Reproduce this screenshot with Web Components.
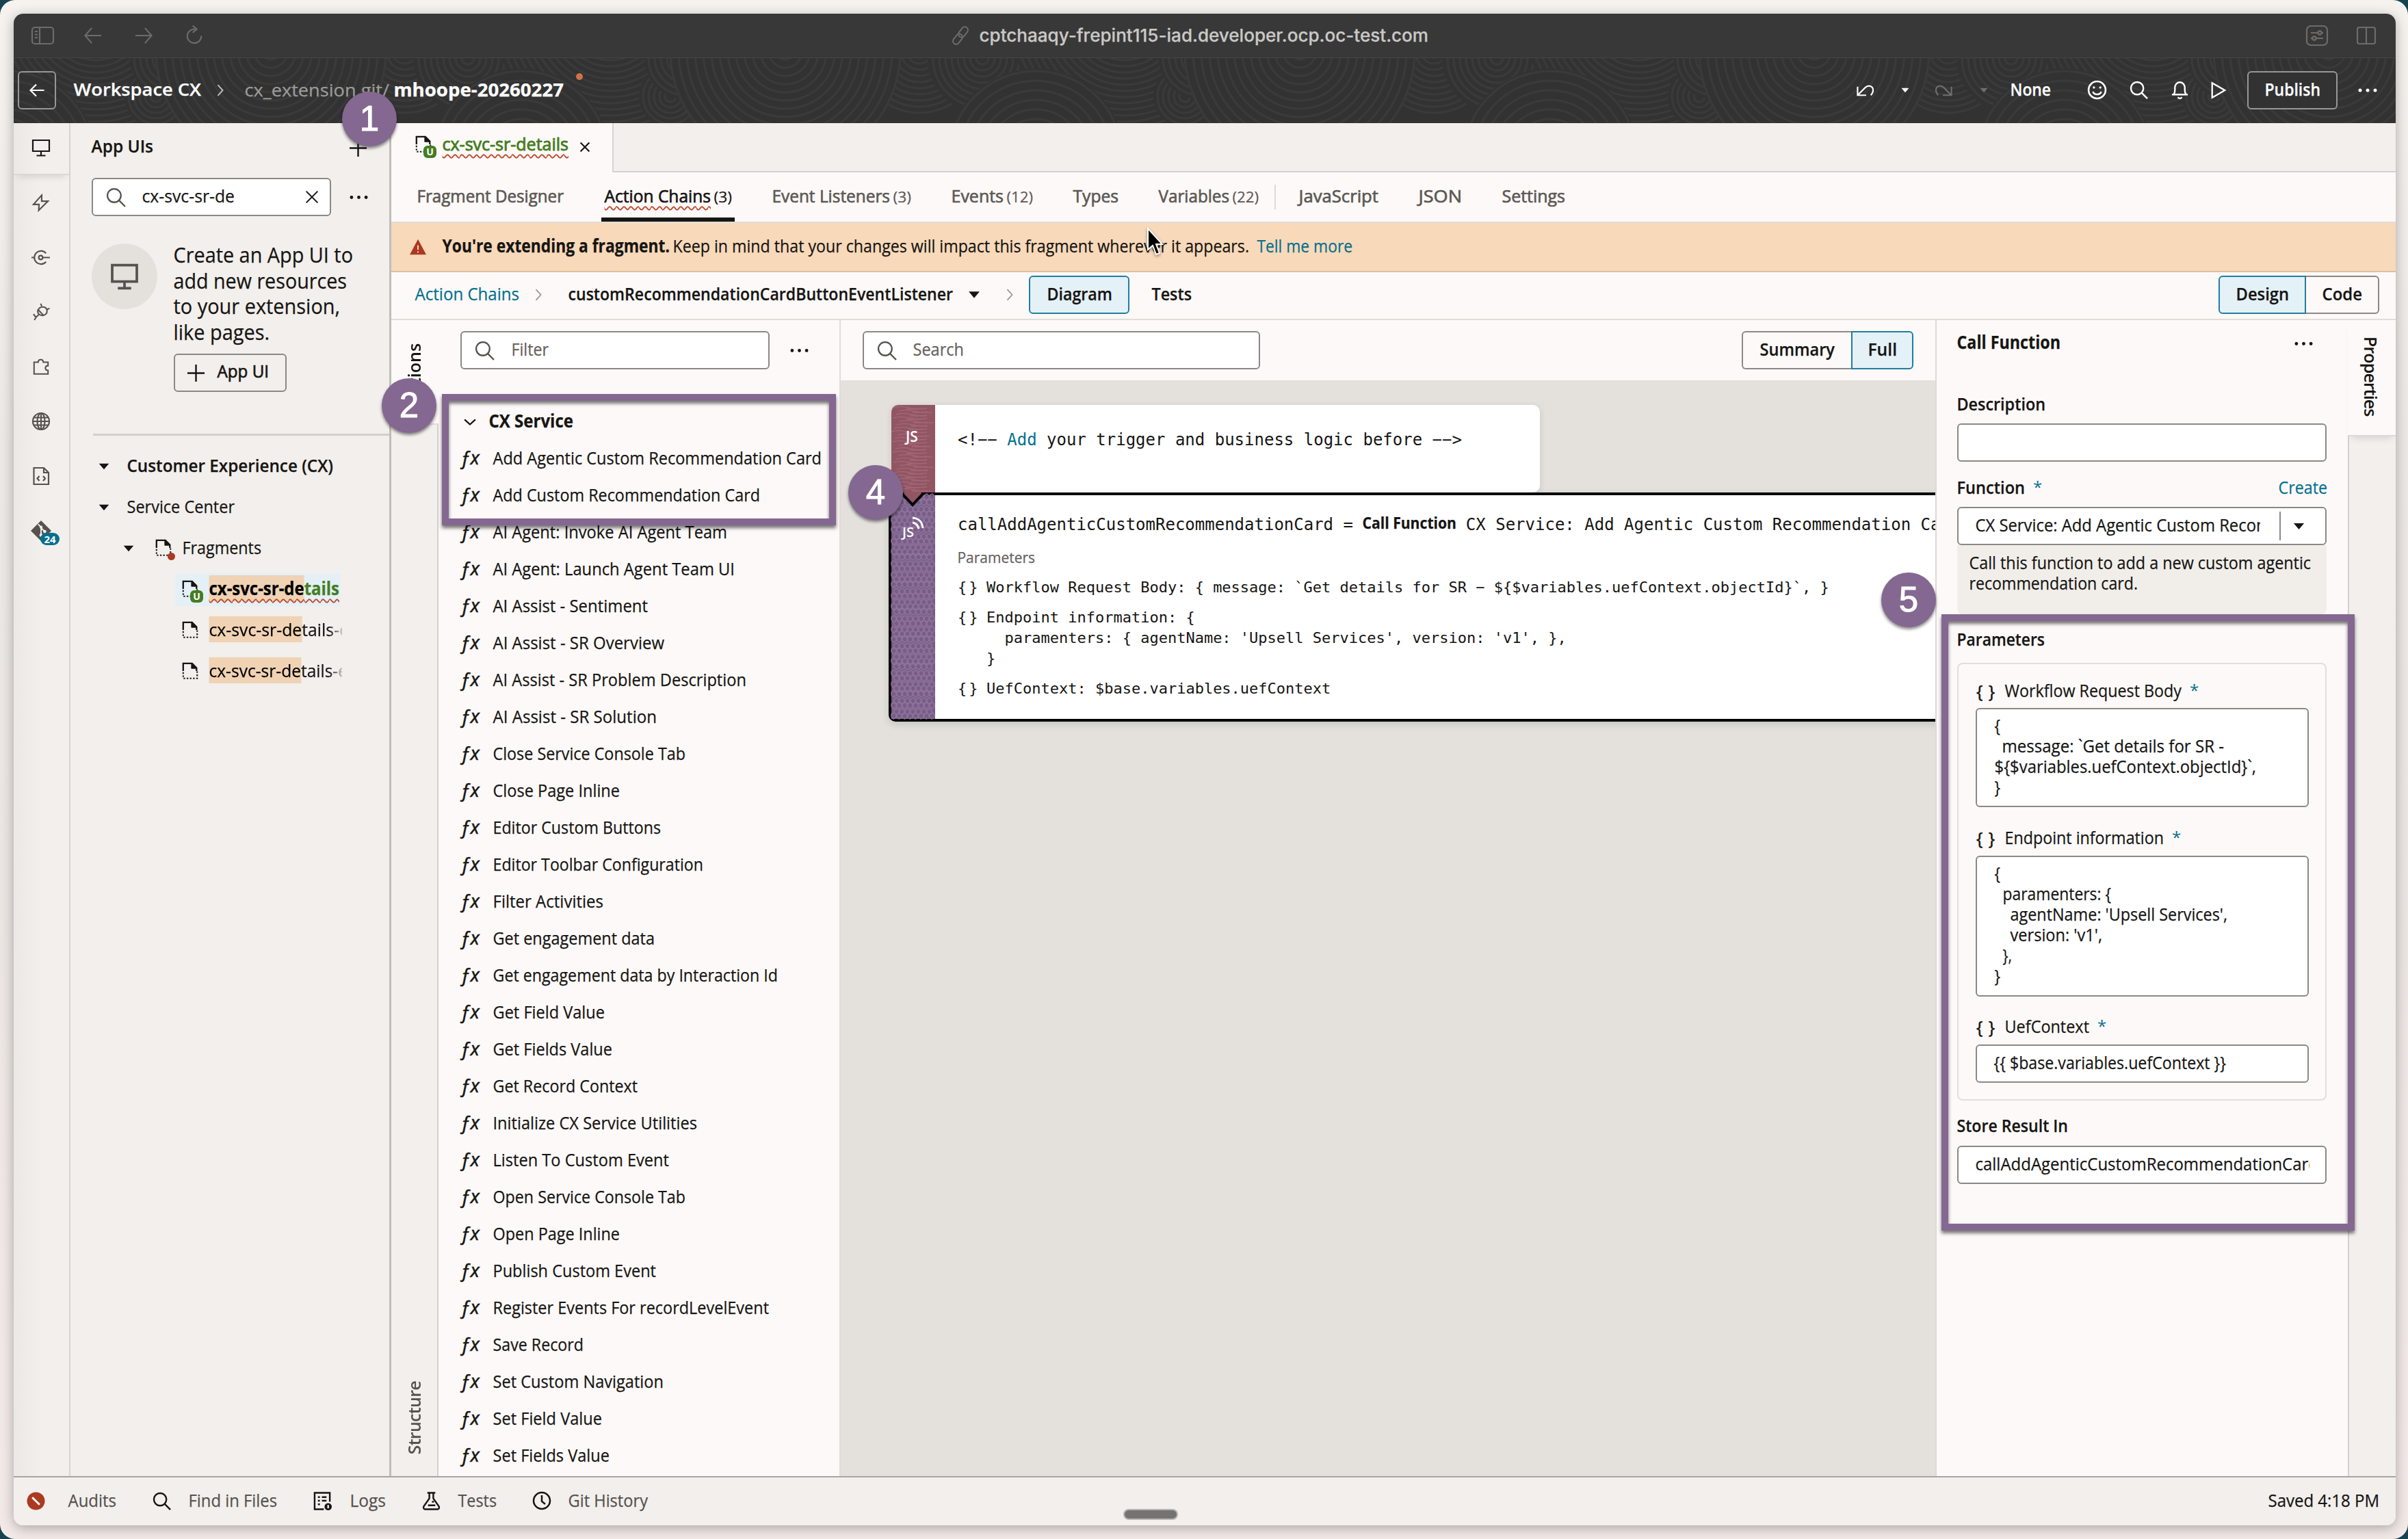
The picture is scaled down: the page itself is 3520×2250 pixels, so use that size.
<!DOCTYPE html>
<html lang="en">
<head>
<meta charset="utf-8">
<title>cx-svc-sr-details</title>
<style>
  body {
    margin: 0;
    width: 3520px;
    height: 2250px;
    overflow: hidden;
    background: #174350;
    font-family: 'Open Sans', 'Noto Sans', sans-serif;
    font-size: 26px;
    color: #161513;
  }
</style>
</head>
<body>
<cx-workspace></cx-workspace>

<script>
const ICONS = {
  monitor: '<path d="M2 3h24v16H2zM14 19v6M7.500 25.500h13"/>',
  bolt: '<path d="M15.500 2.500 3 16.500h8.500L11 25.500l14-14h-9.500z"/>',
  connect: '<path d="M22 7.500a10 10 0 1 0 0 13M0 14h4M17 14h11"/><circle cx="14" cy="14" r="3"/>',
  plug: '<path d="M9.500 10.500 18 19.500c5-1.500 7-6 4.500-10.500C20 5 12.500 5 9.500 10.500zM15 5l-1.500-4M23.500 10l4-1.500M9 11c-1 5 2 9 8.500 8.500M10.500 18 6 22.500 2 17.500M6 22.500 3.500 27"/>',
  puzzle: '<path d="M3 25.500V7h6.500c0-5.500 8-5.500 8 0H25v5.500c-5.500 0-5.500 7.500 0 7.500v5.500z"/>',
  globe: '<circle cx="14" cy="14" r="12"/><ellipse cx="14" cy="14" rx="5.500" ry="12"/><path d="M2 14h24M14 2v24M4 8.500h20M4 19.500h20"/>',
  filecode: '<path d="M3.500 2h14.500l7 7v17h-21.500zM18 2v7h7M11.500 14l-3 3.500 3 3.500M17 14l3 3.500-3 3.500"/>',
  git: '<path d="M14 0 28 14 14 28 0 14z" fill="currentColor" stroke="none"/><g stroke="#f2efec" stroke-width="1.800"><path d="M10 5l4 4v11M14 10l5 5"/></g><g fill="#f2efec" stroke="none"><circle cx="14" cy="9" r="2"/><circle cx="14" cy="20" r="2.200"/><circle cx="19" cy="15" r="2.200"/></g>',
  search: '<circle cx="11.500" cy="11.500" r="9.500"/><path d="M18.500 18.500 27 27"/>',
  close: '<path d="M5 5l18 18M23 5 5 23"/>',
  plus: '<path d="M14 1v26M1 14h26"/>',
  dots: '<g fill="currentColor" stroke="none"><circle cx="3" cy="14" r="2.500"/><circle cx="14" cy="14" r="2.500"/><circle cx="25" cy="14" r="2.500"/></g>',
  caret: '<path d="M5.500 9h17L14 19z" fill="currentColor" stroke="none"/>',
  right: '<path d="M9.500 4l9 10-9 10"/>',
  down: '<path d="M4 9.500l10 9 10-9"/>',
  left: '<path d="M13 5.500 4.500 14l8.500 8.500M4.500 14h20"/>',
  arrowLeft: '<path d="M12 2 1.500 14 12 26M1.500 14h25.500"/>',
  arrowRight: '<path d="M16 2l10.500 12L16 26M26.500 14H1"/>',
  reload: '<path d="M25 14.500a11 11 0 1 1-9.500-10.500M11.500-1.500l6.500 5.500-6.500 5.500"/>',
  sidebar: '<rect x="0" y="2" width="31" height="24" rx="4"/><path d="M11 2v24M4 8h4M4 12.500h4M4 17h4"/>',
  link: '<g transform="rotate(-52 14 14)"><rect x="-2" y="9" width="18" height="10" rx="5"/><rect x="12" y="9" width="18" height="10" rx="5"/></g>',
  sliders: '<rect x="-1" y="0" width="30" height="28" rx="6"/><path d="M5 10h10M21 10h2M5 18h2M13 18h10"/><circle cx="18" cy="10" r="2.600"/><circle cx="10" cy="18" r="2.600"/>',
  split: '<rect x="1" y="2" width="26" height="24" rx="3"/><path d="M14 2v24"/>',
  undo: '<path d="M2.500 9v13h13M2.500 22 14 10.500c5-5 12-2 12 4 0 3-1.500 5.500-3.500 7.500"/>',
  redo: '<path d="M25.500 9v13h-13M25.500 22 14 10.500c-5-5-12-2-12 4 0 3 1.500 5.500 3.500 7.500"/>',
  smile: '<circle cx="14" cy="14" r="12"/><path d="M8 16.500c2.500 5 9.500 5 12 0"/><g fill="currentColor" stroke="none"><circle cx="9.500" cy="10.500" r="1.600"/><circle cx="18.500" cy="10.500" r="1.600"/></g>',
  bell: '<path d="M2 21h24M4.500 21c2.500-3 2-6 2-10 0-11.500 15-11.500 15 0 0 4-.500 7 2 10M11 25c1.500 2.500 4.500 2.500 6 0"/>',
  play: '<path d="M4 2.500v23L24 14z"/>',
  warn: '<path d="M14 1 28 27H0z" fill="#aa3a22" stroke="none"/><path d="M14 11v8M14 21.500v2.500" stroke="#f8d9ba"/>',
  fragment: '<path d="M3 14V2h14l7 7v5" stroke-width="2.500"/><path d="M16 2v8h8" fill="currentColor" stroke-width="1"/><path d="M3 16v9.500h22V14" stroke-dasharray="2.500 2.500"/>',
  noentry: '<circle cx="14" cy="14" r="13.500" fill="#aa3a22" stroke="none"/><path d="M8.500 8.500l11 11" stroke="#fff" stroke-width="3"/>',
  logs: '<path d="M16 26.500H2v-25h23V15M7 8h3M13 8h7M7 13.500h3M13 13.500h7M7 19h3"/><circle cx="22.500" cy="22.500" r="5.500" fill="currentColor" stroke="none"/><path d="M22.500 20v5" stroke="#f2efec"/>',
  flask: '<path d="M8 1.500h12M11 2v8L2.500 22c-1 2.500 0 4.500 3 4.500h17c3 0 4-2 3-4.500L17 10V2M9 20.500h11M15 15h3"/>',
  clock: '<circle cx="14" cy="14" r="12"/><path d="M14 6v9l5 4"/>'
}

// Shared base: renders the class template into an open shadow root
class CxElement extends HTMLElement {
  constructor () {
    super()
    this.shadow = this.attachShadow({ mode: 'open' })
  }

  connectedCallback () {
    this.shadow.innerHTML = this.template()
  }
}

const t = (text, w, attrs = '') => `<ui-text w="${w}" ${attrs}>${text}</ui-text>`
const i = (name, size = 28, style = '', weight = 2.2) =>
  `<ui-icon name="${name}" size="${size}" weight="${weight}" style="${style}"></ui-icon>`

class UiIcon extends CxElement {
  template () {
    const size = this.getAttribute('size')
    return `
      <style>
        :host { display: block; flex: none; width: ${size}px; height: ${size}px; }
        svg { display: block; overflow: visible; }
      </style>
      <svg width="${size}" height="${size}" viewBox="0 0 28 28" fill="none" stroke="currentColor"
        stroke-width="${this.getAttribute('weight')}">${ICONS[this.getAttribute('name')]}</svg>`
  }
}

class ContourPattern extends CxElement {
  rings (cx, cy, max, step) {
    let out = `<circle cx="${cx}" cy="${cy}" r="${max}" fill="#323232" stroke="none"/>`
    for (let r = step; r <= max; r += step) out += `<circle cx="${cx}" cy="${cy}" r="${r}"/>`
    return out
  }

  template () {
    return `
      <style>:host, svg { display: block; width: 100%; height: 100%; }</style>
      <svg>
        <defs>
          <pattern id="p" width="752" height="95" patternUnits="userSpaceOnUse" x="572">
            <g fill="none" stroke="#3a3a3a" stroke-width="3">
              ${this.rings(0, -10, 90, 9)}${this.rings(752, -10, 90, 9)}
              ${this.rings(92, 0, 80, 9)}
              ${this.rings(300, -60, 170, 9)}
              ${this.rings(388, 56, 46, 8)}${this.rings(410, 0, 60, 9)}
              ${this.rings(556, -10, 170, 12)}
              ${this.rings(170, 145, 130, 14)}
            </g>
          </pattern>
        </defs>
        <rect width="100%" height="100%" fill="url(#p)"/>
      </svg>`
  }
}

class BrowserBar extends CxElement {
  template () {
    return `
      <style>
        :host { display: flex; align-items: center; height: 64px; background: #383838; color: #6d6c6b; border-bottom: 1px solid #444; }
        .url { color: #cac8c6; font-family: Inter, sans-serif; font-weight: 500; margin: 2px 0 0 15px; }
      </style>
      ${i('sidebar', 28, 'margin-left:27px')}
      ${i('arrowLeft', 26, 'margin-left:48px')}
      ${i('arrowRight', 26, 'margin-left:48px')}
      ${i('reload', 26, 'margin-left:48px')}
      ${i('link', 26, 'margin-left:1094px')}
      <div class="url">${t('cptchaaqy-frepint115-iad.developer.ocp.oc-test.com', 655)}</div>
      ${i('sliders', 28, 'margin-left:1286px')}
      ${i('split', 28, 'margin-left:44px')}`
  }
}

class AppHeader extends CxElement {
  template () {
    return `
      <style>
        :host { display: grid; height: 95px; grid-template-rows: 95px; background: #323232; color: #fff; }
        contour-pattern, .row { grid-area: 1 / 1; }
        .row { display: flex; align-items: center; min-width: 0; padding-bottom: 2px; }
        .back, .publish { box-sizing: border-box; height: 56px; border: 2px solid #989795; border-radius: 6px; display: flex; align-items: center; justify-content: center; }
        .back { width: 56px; margin-left: 6px; }
        .publish { width: 132px; margin-left: 29px; background: #323232; }
        .dot { width: 10px; height: 10px; border-radius: 50%; background: #d0714a; margin: 0 0 40px 19px; }
        .grow { flex: 1; }
      </style>
      <contour-pattern></contour-pattern>
      <div class="row">
        <div class="back">${i('left', 28)}</div>
        ${t('Workspace CX', 185, 'style="margin-left:26px;font-weight:600"')}
        ${i('right', 22, 'margin-left:18px;color:#bbb', 2.5)}
        ${t('cx_extension.git/', 210, 'style="margin-left:25px;color:#9d9b99;padding-top:3px"')}
        ${t('mhoope-20260227', 247, 'style="margin-left:8px;font-weight:700;padding-top:3px"')}
        <div class="dot"></div>
        <div class="grow"></div>
        ${i('undo', 27)}
        ${i('caret', 18, 'margin-left:36px')}
        ${i('redo', 27, 'margin-left:34px;color:#6f6e6d')}
        ${i('caret', 18, 'margin-left:36px;color:#6f6e6d')}
        ${t('None', 58, 'style="margin-left:30px;font-weight:600"')}
        ${i('smile', 29, 'margin-left:54px', 2.5)}
        ${i('search', 27, 'margin-left:33px', 2.5)}
        ${i('bell', 27, 'margin-left:33px', 2.5)}
        ${i('play', 26, 'margin-left:30px', 2.5)}
        <div class="publish">${t('Publish', 80, 'style="font-weight:600"')}</div>
        ${i('dots', 28, 'margin:0 27px 0 30px')}
      </div>`
  }
}

class SideRail extends CxElement {
  template () {
    return `
      <style>
        :host { display: flex; flex-direction: column; width: 83px; border-right: 2px solid #d8d4d1; box-sizing: border-box; background: linear-gradient(90deg, #ebe8e5, #f2efec 40px); color: #55524f; }
        div { height: 80px; display: flex; align-items: center; justify-content: center; padding-right: 2px; }
        .on { height: 74px; color: #161513; border-bottom: 2px solid #dcd8d5; box-shadow: 0 8px 10px -6px #00000022; }
        .on ui-icon { margin-bottom: 2px; }
        .git { position: relative; }
        b { position: absolute; left: 39px; top: 43px; width: 28px; height: 18px; border-radius: 9px; background: #04708e; color: #fff; font-size: 15px; line-height: 18px; text-align: center; }
      </style>
      <div class="on">${i('monitor', 28)}</div>
      <div>${i('bolt', 27)}</div>
      <div>${i('connect', 27)}</div>
      <div>${i('plug', 26)}</div>
      <div>${i('puzzle', 26)}</div>
      <div>${i('globe', 28)}</div>
      <div>${i('filecode', 28)}</div>
      <div class="git">${i('git', 30)}<b>24</b></div>`
  }
}

class FragmentIcon extends CxElement {
  template () {
    const badge = this.getAttribute('badge')
    return `
      <style>
        :host { display: block; position: relative; width: 24px; height: 28px; flex: none; color: #161513; }
        .U { position: absolute; left: 12px; top: 15px; width: 19px; height: 18px; border-radius: 6px; background: #457d22; color: #fff; font: bold 14px/18px 'Open Sans'; text-align: center; }
        .dot { position: absolute; left: 18px; top: 20px; width: 11px; height: 11px; border-radius: 50%; background: #aa3a22; }
      </style>
      ${i('fragment', 26, 'margin-left:-1px')}
      ${badge === 'U' ? '<span class="U">U</span>' : badge ? '<span class="dot"></span>' : ''}`
  }
}

class TextField extends CxElement {
  template () {
    return `
      <style>
        :host { display: flex; align-items: center; box-sizing: border-box; height: 56px; border: 2px solid #8b8987; border-radius: 6px; background: #fff; overflow: hidden; flex: none; }
      </style>
      <slot></slot>`
  }
}

class AppPanel extends CxElement {
  template () {
    return `
      <style>
        :host { display: flex; flex-direction: column; box-sizing: border-box; width: 469px; border-right: 3px solid #c1bdbb; background: #f2efec; }
        .row { display: flex; align-items: center; flex: none; }
        .title { height: 70px; padding-left: 31px; }
        .promo { align-items: flex-start; margin: 40px 0 0 31px; height: 278px; box-sizing: border-box; }
        .circle { width: 96px; height: 96px; border-radius: 50%; background: #e4e1dd; display: flex; align-items: center; justify-content: center; color: #55524f; }
        .copy { margin-left: 24px; font-size: 31px; line-height: 37.500px; }
        .copy > ui-text { display: block; }
        .btn { box-sizing: border-box; width: 165px; height: 56px; border: 2px solid #8b8987; border-radius: 6px; margin-top: 11px; font-size: 26px; }
        hr { margin: 0 0 0 33px; border: 0; border-top: 3px solid #d3cfcc; width: 433px; }
        .tree { padding-top: 15px; }
        .tree .row { height: 60px; }
        mark { background: #f0d3b4; color: #000; padding: 1px 0; }
        .tree .sel { margin: 6px 0 6px 153px; height: 48px; width: 241px; background: #e4f0f6; }
        .leaf { margin-left: 153px; width: 244px; overflow: hidden; -webkit-mask: linear-gradient(90deg, #000 225px, #0003); }
      </style>
      <div class="row title">
        ${t('App UIs', 89, 'style="font-weight:600"')}
        ${i('plus', 27, 'margin:2px 0 0 287px', 2.500)}
      </div>
      <div class="row" style="padding:10px 0 0 31px">
        <text-field style="width:350px">
          ${i('search', 29, 'margin-left:19px;color:#55524f')}
          ${t('cx-svc-sr-de', 134, 'style="margin-left:24px"')}
          ${i('close', 26, 'margin-left:101px')}
        </text-field>
        ${i('dots', 27, 'margin-left:27px')}
      </div>
      <div class="row promo">
        <div class="circle">${i('monitor', 42, '', 2.500)}</div>
        <div class="copy">
          ${t('Create an App UI to', 261)}
          ${t('add new resources', 252)}
          ${t('to your extension,', 242)}
          ${t('like pages.', 139)}
          <div class="row btn">
            ${i('plus', 27, 'margin-left:17px', 2.500)}
            ${t('App UI', 74, 'style="margin-left:18px;--ink:.7px"')}
          </div>
        </div>
      </div>
      <hr>
      <div class="tree">
        <div class="row">${i('caret', 24, 'margin-left:37px')}${t('Customer Experience (CX)', 300, 'style="margin-left:22px;font-weight:600"')}</div>
        <div class="row">${i('caret', 24, 'margin-left:37px')}${t('Service Center', 156, 'style="margin-left:22px"')}</div>
        <div class="row">${i('caret', 24, 'margin-left:73px')}<fragment-icon badge="dot" style="margin-left:27px"></fragment-icon>${t('Fragments', 114, 'style="margin-left:16px"')}</div>
        <div class="row sel">
          <fragment-icon badge="U" style="margin-left:10px"></fragment-icon>
          ${t('<mark>cx-svc-sr-de</mark>tails', 189, 'squiggle style="margin-left:16px;font-weight:700;color:#457d22"')}
        </div>
        <div class="row leaf"><fragment-icon style="margin-left:10px"></fragment-icon>${t('<mark>cx-svc-sr-de</mark>tails-c', 201, 'style="margin-left:16px"')}</div>
        <div class="row leaf"><fragment-icon style="margin-left:10px"></fragment-icon>${t('<mark>cx-svc-sr-de</mark>tails-e', 201, 'style="margin-left:16px"')}</div>
      </div>`
  }
}

class EditorTabs extends CxElement {
  template () {
    const tab = (label, w, gap, count, cw) => `
      <div style="margin-left:${gap}px">${t(label, w)}${count ? t(count, cw, 'class="n"') : ''}</div>`
    return `
      <style>
        :host { display: block; }
        .files { display: flex; height: 72px; }
        .file { width: 323px; display: flex; align-items: center; background: #fdf9f8; border-right: 2px solid #d8d4d1; padding-bottom: 8px; height: 64px; }
        .rest { flex: 1; height: 70px; background: #f2efec; border-bottom: 2px solid #d3d0cd; }
        nav { display: flex; align-items: center; height: 72px; border-bottom: 2px solid #e0dcd9; color: #5c5956; --ink: .7px; }
        nav div { display: flex; align-items: baseline; height: 72px; line-height: 72px; }
        .n { font-size: 22px; margin-left: 6px; --ink: .2px; }
        nav .on { margin-left: 56px; padding: 0 5px; height: 66px; color: #161513; border-bottom: 6px solid #161513; }
        nav i { width: 2px; height: 36px; background: #dcd9d6; margin-left: 24px; }
      </style>
      <div class="files">
        <div class="file">
          <fragment-icon badge="U" style="margin-left:35px"></fragment-icon>
          ${t('cx-svc-sr-details', 183, 'squiggle style="margin-left:16px;color:#457d22;--ink:.9px"')}
          ${i('close', 20, 'margin:5px 0 0 15px', 3)}
        </div>
        <div class="rest"></div>
      </div>
      <nav>
        ${tab('Fragment Designer', 213, 38)}
        <div class="on">${t('Action Chains', 154, 'squiggle')}${t('(3)', 25, 'class="n"')}</div>
        ${tab('Event Listeners', 171, 55, '(3)', 25)}
        ${tab('Events', 75, 60, '(12)', 37)}
        ${tab('Types', 65, 60)}
        ${tab('Variables', 102, 60, '(22)', 37)}
        <i></i>
        ${tab('JavaScript', 115, 34)}
        ${tab('JSON', 62, 60)}
        ${tab('Settings', 91, 60)}
      </nav>`
  }
}

class FragmentWarning extends CxElement {
  template () {
    return `
      <style>
        :host { display: flex; align-items: center; height: 70px; background: #f8d9ba; border-bottom: 2px solid #dcc0a3; }
      </style>
      ${i('warn', 24, 'margin-left:27px')}
      ${t('You\'re extending a fragment.', 331, 'style="margin-left:24px;font-weight:700"')}
      ${t('Keep in mind that your changes will impact this fragment wherever it appears.', 841, 'style="margin-left:6px"')}
      ${t('Tell me more', 138, 'style="margin-left:13px;color:#04708e"')}`
  }
}

class SegGroup extends CxElement {
  template () {
    const items = this.getAttribute('items').split('|').map(s => s.split(','))
    return `
      <style>
        :host { display: flex; height: 56px; font-weight: 600; flex: none; }
        div { box-sizing: border-box; height: 56px; display: flex; align-items: center; justify-content: center; border: 2px solid #8b8987; }
        div:first-of-type { border-radius: 6px 0 0 6px; }
        div:last-of-type { border-radius: 0 6px 6px 0; }
        div:only-of-type { border-radius: 6px; }
        div:first-of-type:not(.on) { border-right: 0; }
        div:last-of-type:not(.on) { border-left: 0; }
        .on { background: #e4f1f7; border-color: #227e9e; }
      </style>
      ${items.map(([label, tw, w, on]) => `<div class="${on || ''}" style="width:${w}px">${t(label, tw)}</div>`).join('')}`
  }
}

class ChainCrumbs extends CxElement {
  template () {
    return `
      <style>
        :host { display: flex; align-items: center; height: 66px; padding-bottom: 2px; border-bottom: 2px solid #e0dcd9; }
        .grow { flex: 1; }
      </style>
      ${t('Action Chains', 151, 'style="margin-left:35px;color:#04708e"')}
      ${i('right', 22, 'margin-left:18px;color:#9a9794')}
      ${t('customRecommendationCardButtonEventListener', 561, 'style="margin-left:33px;font-weight:600"')}
      ${i('caret', 26, 'margin-left:19px')}
      ${i('right', 22, 'margin-left:28px;color:#9a9794')}
      <seg-group items="Diagram,94,147,on" style="margin-left:17px"></seg-group>
      ${t('Tests', 57, 'style="margin-left:33px;font-weight:600"')}
      <div class="grow"></div>
      <seg-group items="Design,76,128,on|Code,57,107" style="margin-right:24px"></seg-group>`
  }
}

const ACTIONS = [
  ['Add Agentic Custom Recommendation Card', 479], ['Add Custom Recommendation Card', 389],
  ['AI Agent: Invoke AI Agent Team', 341], ['AI Agent: Launch Agent Team UI', 352],
  ['AI Assist - Sentiment', 225], ['AI Assist - SR Overview', 249],
  ['AI Assist - SR Problem Description', 369], ['AI Assist - SR Solution', 238],
  ['Close Service Console Tab', 280], ['Close Page Inline', 184],
  ['Editor Custom Buttons', 244], ['Editor Toolbar Configuration', 306],
  ['Filter Activities', 160], ['Get engagement data', 235],
  ['Get engagement data by Interaction Id', 415], ['Get Field Value', 162],
  ['Get Fields Value', 173], ['Get Record Context', 210],
  ['Initialize CX Service Utilities', 297], ['Listen To Custom Event', 256],
  ['Open Service Console Tab', 280], ['Open Page Inline', 184],
  ['Publish Custom Event', 237], ['Register Events For recordLevelEvent', 402],
  ['Save Record', 131], ['Set Custom Navigation', 248],
  ['Set Field Value', 158], ['Set Fields Value', 169]
]

class ActionPalette extends CxElement {
  template () {
    return `
      <style>
        :host { display: flex; flex: none; width: 657px; background: #fdf9f8; border-right: 2px solid #e0dcd9; box-sizing: border-box; }
        .strip { width: 69px; display: flex; flex-direction: column; justify-content: space-between; }
        .v { writing-mode: vertical-rl; transform: rotate(180deg); font-weight: 600; font-size: 25px; line-height: 66px; }
        .top { height: 151px; }
        .top .v { margin-top: 34px; height: 90px; text-align: end; }
        .low { flex: 1; background: #f2efec; border-right: 2px solid #d3d0cd; border-top: 2px solid #e0dcd9; display: flex; align-items: flex-end; color: #55524f; }
        .low .v { margin-bottom: 32px; letter-spacing: -.7px; }
        .list { flex: 1; }
        .row { display: flex; align-items: center; height: 54px; }
        .filter { height: 56px; padding: 16px 0 50px 32px; }
        .fx { width: 26px; margin-left: 32px; font-style: italic; font-size: 27px; -webkit-text-stroke: .6px; padding-bottom: 5px; }
      </style>
      <div class="strip">
        <div class="top"><div class="v">Actions</div></div>
        <div class="low"><div class="v">Structure</div></div>
      </div>
      <div class="list">
        <div class="row filter">
          <text-field style="width:452px">${i('search', 29, 'margin-left:19px;color:#55524f')}${t('Filter', 53, 'style="margin-left:25px;color:#65625f"')}</text-field>
          ${i('dots', 27, 'margin-left:30px')}
        </div>
        <div class="row">${i('down', 22, 'margin-left:35px', 3)}${t('CX Service', 122, 'style="margin-left:17px;font-weight:700"')}</div>
        ${ACTIONS.map(([label, w]) => `<div class="row"><span class="fx">ƒx</span>${t(label, w, 'style="margin-left:22px"')}</div>`).join('')}
      </div>`
  }
}

class ChainDiagram extends CxElement {
  template () {
    return `
      <style>
        :host { display: flex; flex: none; flex-direction: column; width: 1600px; background: #e4e1dd; overflow: hidden; }
        .bar { display: flex; align-items: center; height: 88px; background: #fdf9f8; flex: none; }
        .bar seg-group { margin-left: 704px; }
        .canvas { padding: 36px 0 0 74px; }
        .node { display: flex; background: #fff; font-family: 'DejaVu Sans Mono', monospace; font-size: 24px; }
        .one { width: 948px; height: 128px; border-radius: 10px 10px 10px 0; box-shadow: 0 2px 10px #0000001f; overflow: hidden; }
        .two { margin-left: -4px; width: 1640px; height: 327px; border: 4px solid #000; border-radius: 0 0 10px 10px; box-shadow: 0 4px 12px #00000022; }
        .side { width: 64px; flex: none; color: #fff; font-family: 'Open Sans', sans-serif; font-size: 22px; position: relative; }
        .side svg { position: absolute; left: 0; top: 0; }
        .one .side { background: #925564; }
        .two .side { background: #785d86; }
        .js { position: relative; padding-left: 21px; line-height: 92px; font-weight: 600; font-size: 21px; }
        .two .js { font-size: 20px; padding-left: 16px; line-height: 108px; }
        .code { padding-left: 33px; }
        .stmt { white-space: pre; line-height: 30px; }
        .add { color: #04708e; }
        .call { font-family: 'Open Sans', sans-serif; font-weight: 700; font-size: 23px; }
        .sub { font-family: 'Open Sans', sans-serif; font-size: 22px; color: #65625f; line-height: 30px; margin-top: 19px; }
        .p { font-size: 22px; line-height: 30px; display: flex; white-space: pre; }
        .p span { width: 42px; letter-spacing: 3px; }
      </style>
      <div class="bar">
        <text-field style="width:581px;margin-left:32px">${i('search', 29, 'margin-left:19px;color:#55524f')}${t('Search', 73, 'style="margin-left:24px;color:#65625f"')}</text-field>
        <seg-group items="Summary,108,160|Full,41,91,on"></seg-group>
      </div>
      <div class="canvas">
        <div class="node one">
          <div class="side">
            <svg width="64" height="128"><path d="${this.grain()}" stroke="#a36674" stroke-width="1.500" fill="none"/></svg>
            <div class="js">JS</div>
          </div>
          <div class="code"><div class="stmt" style="line-height:102px">&lt;!−− <span class="add">Add</span> your trigger and business logic before −−&gt;</div></div>
        </div>
        <div class="node two">
          <div class="side">
            <svg width="64" height="327" style="overflow:visible">
              <path d="${this.cells()}" stroke="#8d729b" stroke-width="1.500" fill="none"/>
              <path d="M17-5 31 14 45-5z" fill="#925564"/>
              <path d="M15-3 31 14 47-3" stroke="#000" stroke-width="4" fill="none"/>
              <g stroke="#fff" stroke-width="3" fill="none"><path d="M31 40c6 1 8 4 9 9M31 33c10 1 14 6 15 15"/></g>
            </svg>
            <div class="js">JS</div>
          </div>
          <div class="code">
            <div class="stmt" style="margin-top:27px">callAddAgenticCustomRecommendationCard = ${t('Call Function', 136, 'class="call"')} CX Service: Add Agentic Custom Recommendation Card</div>
            <div class="sub">${t('Parameters', 112)}</div>
            <div class="p" style="margin-top:13px"><span>{}</span>Workflow Request Body: { message: \`Get details for SR − \${$variables.uefContext.objectId}\`, }</div>
            <div class="p" style="margin-top:14px"><span>{}</span>Endpoint information: {</div>
            <div class="p"><span></span>  paramenters: { agentName: 'Upsell Services', version: 'v1', },</div>
            <div class="p"><span></span>}</div>
            <div class="p" style="margin-top:14px"><span>{}</span>UefContext: $base.variables.uefContext</div>
          </div>
        </div>
      </div>`
  }

  grain () {
    let d = ''
    for (let y = 4; y < 128; y += 5) {
      const k = (y * 7) % 13
      d += `M${k} ${y}q12 -3 22 0t${30 - k} 1`
      d += `M${k + 20} ${y + 2}h${18 + k}`
    }
    return d
  }

  cells () {
    let d = ''
    for (let y = 0, row = 0; y < 322; y += 8, row++) {
      for (let x = row % 2 * 4; x < 58; x += 8) {
        const k = (x * 5 + y * 3 + row * row) % 5
        d += `M${x} ${y + k}l4 -2 3 3 0 4 -4 2 -3 -3z`
      }
    }
    return d
  }
}

class PropertyPanel extends CxElement {
  template () {
    const label = (text, w, top) => `
      <div class="label" style="margin-top:${top}px">
        <span class="braces">{ }</span>${t(text, w, 'style="margin-left:14px"')}<span class="req">*</span>
      </div>`
    const line = (text, w, indent = 0) => t(text, w, `style="margin-left:${26 + indent}px"`)
    return `
      <style>
        :host { display: flex; flex: 1; min-width: 0; background: #fdf9f8; border-left: 2px solid #dcd9d6; }
        .body { flex: none; width: 540px; padding: 0 31px 0 30px; border-right: 2px solid #d3d0cd; }
        .head { display: flex; align-items: center; justify-content: space-between; height: 68px; padding-right: 20px; font-weight: 700; }
        .lbl { display: flex; align-items: center; height: 36px; font-weight: 600; }
        .req { color: #04708e; font-weight: 400; margin: -5px 0 0 13px; font-size: 24px; }
        .create { margin-left: auto; color: #04708e; font-weight: 400; }
        .select i { width: 2px; height: 42px; background: #8b8987; margin-left: 28px; }
        .clip { overflow: hidden; display: flex; box-sizing: border-box; }
        .help { height: 101px; box-sizing: border-box; background: #f1eeea; border-radius: 0 0 8px 8px; padding: 12px 18px; line-height: 30px; }
        .help ui-text, .area ui-text { display: block; }
        .group { box-sizing: border-box; height: 640px; margin-top: 15px; border: 2px solid #e2dedb; border-radius: 8px; padding: 0 24px 0 25px; }
        .label { display: flex; align-items: center; height: 36px; }
        .braces { width: 28px; margin: -3px 0 0 1px; font-size: 25px; word-spacing: 3px; white-space: pre; letter-spacing: -.5px; -webkit-text-stroke: .5px; }
        .area { display: block; padding-top: 11px; line-height: 29.900px; }
        .tab { flex: 1; min-width: 0; background: #f2efec; }
        .tab .on { height: 170px; margin-left: -2px; background: #fdf9f8; border-bottom: 2px solid #dcd8d5; box-shadow: 0 8px 10px -6px #0002; box-sizing: border-box; }
        .v { writing-mode: vertical-rl; font-weight: 600; font-size: 25px; line-height: 68px; padding-top: 24px; letter-spacing: -.9px; }
      </style>
      <div class="body">
        <div class="head">${t('Call Function', 150)}${i('dots', 27)}</div>
        <div class="lbl" style="margin-top:38px">${t('Description', 128)}</div>
        <text-field style="margin-top:9px"></text-field>
        <div class="lbl" style="margin-top:21px">${t('Function', 98)}<span class="req">*</span>${t('Create', 70, 'class="create"')}</div>
        <text-field class="select" style="margin-top:9px">
          <div class="clip" style="width:441px;padding-left:25px">${t('CX Service: Add Agentic Custom Recommendation Card', 611)}</div>
          <i></i>${i('caret', 25, 'margin-left:14px')}
        </text-field>
        <div class="help">${t('Call this function to add a new custom agentic', 498)}${t('recommendation card.', 245)}</div>
        <div class="lbl" style="margin-top:20px;">${t('Parameters', 127)}</div>
        <div class="group">
          ${label('Workflow Request Body', 257, 22)}
          <text-field class="area" style="margin-top:6px;height:145px">
            ${line('{', 7)}${line('message: `Get details for SR -', 323, 11)}${line('${$variables.uefContext.objectId}`,', 381)}${line('}', 7)}
          </text-field>
          ${label('Endpoint information', 231, 28)}
          <text-field class="area" style="margin-top:7px;height:206px">
            ${line('{', 7)}${line('paramenters: {', 157, 12)}${line('agentName: \'Upsell Services\',', 316, 23)}${line('version: \'v1\',', 133, 23)}${line('},', 12, 12)}${line('}', 7)}
          </text-field>
          ${label('UefContext', 122, 27)}
          <text-field style="margin-top:7px">${t('{{ $base.variables.uefContext }}', 338, 'style="margin-left:25px"')}</text-field>
        </div>
        <div class="lbl" style="margin-top:20px">${t('Store Result In', 161)}</div>
        <text-field style="margin-top:10px"><div class="clip" style="padding-left:25px;width:513px">${t('callAddAgenticCustomRecommendationCard', 500)}</div></text-field>
      </div>
      <div class="tab"><div class="on"><div class="v">Properties</div></div></div>`
  }
}

class StatusBar extends CxElement {
  template () {
    const item = (icon, iw, gap, label, w, lg) =>
      `${i(icon, iw, `margin:-2px 0 0 ${gap}px;color:#161513`, 2.5)}${t(label, w, `style="margin-left:${lg}px"`)}`
    return `
      <style>
        :host { display: flex; align-items: center; height: 70px; border-top: 2px solid #a8a6a4; background: #f2efec; color: #55524f; position: relative; }
        .saved { margin: 0 25px 0 auto; color: #161513; }
        .grip { position: absolute; left: 1622px; top: 46px; width: 76px; height: 12px; border-radius: 8px; background: #747371; border: 2px solid #b6b4b2; }
      </style>
      ${item('noentry', 27, 19, 'Audits', 69, 34)}
      ${item('search', 27, 54, 'Find in Files', 128, 26)}
      ${item('logs', 27, 54, 'Logs', 51, 27)}
      ${item('flask', 27, 54, 'Tests', 55, 26)}
      ${item('clock', 28, 53, 'Git History', 115, 25)}
      <div class="saved">${t('Saved 4:18 PM', 161)}</div>
      <div class="grip"></div>`
  }
}

class StepBadge extends CxElement {
  template () {
    return `
      <style>
        :host { position: absolute; left: ${this.getAttribute('x') - 40}px; top: ${this.getAttribute('y') - 40}px; width: 80px; height: 80px; border-radius: 50%; background: #846891; color: #fff; box-shadow: 0 3px 4px #0007; text-align: center; font: 51px/80px 'Liberation Sans', Arial, sans-serif; -webkit-text-stroke: 1px #fff; }
      </style>
      <slot></slot>`
  }
}

class CalloutFrame extends CxElement {
  template () {
    return `
      <style>
        :host { position: absolute; box-sizing: border-box; border: 10px solid #846891; box-shadow: 0 4px 5px #0008, inset 0 4px 5px #0008; }
      </style>`
  }
}

class MousePointer extends CxElement {
  template () {
    return `
      <style>:host { position: absolute; left: 1676px; top: 332px; filter: drop-shadow(0 2px 2px #0006); }</style>
      <svg width="28" height="44" viewBox="0 0 28 44"><path d="M2 2v31l7-6 5 13 5-2-5-13h9z" fill="#000" stroke="#fff" stroke-width="2"/></svg>`
  }
}

class CxWorkspace extends CxElement {
  template () {
    return `
      <style>
        :host { display: block; box-sizing: border-box; position: relative; width: 3520px; height: 2250px; padding: 20px 18px 20px 20px; border-radius: 22px; background: linear-gradient(#f6f3ef, #ece8e5 30%, #ece6e3 60%, #f3eae8); }
        .window { height: 2210px; border-radius: 14px; overflow: hidden; display: flex; flex-direction: column; background: #f2efec; }
        .shadow { border-radius: 14px; box-shadow: 0 4px 18px #0000004d; }
        main { display: flex; height: 1978px; }
        .editor { flex: 1; min-width: 0; background: #fdf9f8; }
        .work { display: flex; height: 1690px; }
      </style>
      <div class="shadow"><div class="window">
        <browser-bar></browser-bar>
        <app-header></app-header>
        <main>
          <side-rail></side-rail>
          <app-panel></app-panel>
          <div class="editor">
            <editor-tabs></editor-tabs>
            <fragment-warning></fragment-warning>
            <chain-crumbs></chain-crumbs>
            <div class="work">
              <action-palette></action-palette>
              <chain-diagram></chain-diagram>
              <property-panel></property-panel>
            </div>
          </div>
        </main>
        <status-bar></status-bar>
      </div></div>
      <callout-frame style="left:646px;top:576px;width:576px;height:192px"></callout-frame>
      <callout-frame style="left:2838px;top:898px;width:604px;height:901px"></callout-frame>
      <step-badge x="540" y="174">1</step-badge>
      <step-badge x="598" y="593">2</step-badge>
      <step-badge x="1280" y="720">4</step-badge>
      <step-badge x="2790" y="877">5</step-badge>
      <mouse-pointer></mouse-pointer>`
  }
}

// One line of text condensed to the width given in "w"
class UiText extends CxElement {
  connectedCallback () {
    super.connectedCallback()
    const w = Number(this.getAttribute('w'))
    const inner = this.shadow.querySelector('span')
    const natural = inner.getBoundingClientRect().width
    inner.style.transform = `translate(-.5px, -2px) scaleX(${(w + 1.5) / natural})`
  }

  // no whitespace between the tags: the host keeps white-space: pre
  template () {
    return `<style>
        :host { display: inline-block; flex: none; width: ${this.getAttribute('w')}px; white-space: pre; }
        span { display: inline-block; transform-origin: 0 50%; -webkit-text-stroke: var(--ink, .25px); }
        :host([squiggle]) span { text-decoration: underline wavy #c0492e 1.500px; text-underline-offset: 5px; text-decoration-skip-ink: none; }
      </style><span><slot></slot></span>`
  }
}

customElements.define('cx-workspace', CxWorkspace)
customElements.define('browser-bar', BrowserBar)
customElements.define('app-header', AppHeader)
customElements.define('contour-pattern', ContourPattern)
customElements.define('side-rail', SideRail)
customElements.define('app-panel', AppPanel)
customElements.define('editor-tabs', EditorTabs)
customElements.define('fragment-warning', FragmentWarning)
customElements.define('chain-crumbs', ChainCrumbs)
customElements.define('action-palette', ActionPalette)
customElements.define('chain-diagram', ChainDiagram)
customElements.define('property-panel', PropertyPanel)
customElements.define('status-bar', StatusBar)
customElements.define('fragment-icon', FragmentIcon)
customElements.define('text-field', TextField)
customElements.define('seg-group', SegGroup)
customElements.define('step-badge', StepBadge)
customElements.define('callout-frame', CalloutFrame)
customElements.define('mouse-pointer', MousePointer)
customElements.define('ui-icon', UiIcon)
customElements.define('ui-text', UiText)
</script>
</body>
</html>
